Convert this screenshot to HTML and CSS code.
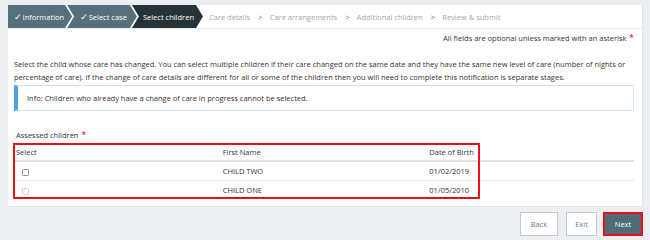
FILE: index.html
```html
<!DOCTYPE html>
<html lang="en">

<head>
    <meta charset="UTF-8">
    <title>Select children</title>
    <meta name="viewport" content="width=device-width, initial-scale=1.0">
    <link rel="stylesheet" href="styles.css">
</head>

<body>

    <div class="page">
        <div class="card">
            <div class="steps">
                <div class="step done first"><span class="tick">&#10003;</span> Information</div>
                <div class="step done"><span class="tick">&#10003;</span> Select case</div>
                <div class="step current">Select children</div>
                <div class="step todo">Care details</div>
                <span class="sep">&gt;</span>
                <div class="step todo">Care arrangements</div>
                <span class="sep">&gt;</span>
                <div class="step todo">Additional children</div>
                <span class="sep">&gt;</span>
                <div class="step todo">Review &amp; submit</div>
            </div>

            <div class="content">
                <p class="optional">All fields are optional unless marked with an asterisk <span class="req">*</span></p>

                <p class="intro">Select the child whose care has changed. You can select multiple children if their care changed on the same date and they have the same new level of care (number of nights or percentage of care). If the change of care details are different for all or some of the children then you will need to complete this notification is separate stages.</p>

                <div class="info">Info: Children who already have a change of care in progress cannot be selected.</div>

                <p class="label">Assessed children <span class="req">*</span></p>

                <div class="table-wrap">
                    <table class="children">
                        <thead>
                            <tr>
                                <th>Select</th>
                                <th>First Name</th>
                                <th>Date of Birth</th>
                            </tr>
                        </thead>
                        <tbody>
                            <tr>
                                <td><input type="checkbox"></td>
                                <td>CHILD TWO</td>
                                <td>01/02/2019</td>
                            </tr>
                            <tr>
                                <td><input type="checkbox" disabled></td>
                                <td>CHILD ONE</td>
                                <td>01/05/2010</td>
                            </tr>
                        </tbody>
                    </table>
                    <div class="highlight"></div>
                </div>
            </div>
        </div>

        <div class="actions">
            <button class="btn back">Back</button>
            <button class="btn exit">Exit</button>
            <button class="btn primary">Next</button>
        </div>
    </div>

</body>

</html>
```

FILE: styles.css
```css
body {
    font-family: "Open Sans", Arial, sans-serif;
    margin: 0;
    background: #ebeff2;
    color: #333;
}

.page {
    padding: 5px 7px 0 8px;
}

.card {
    background: #fff;
    border: 1px solid #e0e5e9;
    border-top: none;
    border-left: none;
}

/* progress steps */
.steps {
    display: flex;
    align-items: center;
    height: 23px;
    border-bottom: 1px solid #e6e9ec;
    font-size: 7.5px;
}

.step {
    height: 23px;
    display: flex;
    align-items: center;
    white-space: nowrap;
}

.tick {
    font-family: "DejaVu Sans", sans-serif;
    font-size: 9px;
    font-weight: bold;
    margin-right: 1px;
}

.step.done,
.step.current {
    color: #fff;
    margin-left: -5px;
    clip-path: polygon(0 0, calc(100% - 7px) 0, 100% 50%, calc(100% - 7px) 100%, 0 100%, 7px 50%);
}

.step.done {
    background: #566f7a;
    padding: 0 10px 0 13px;
}

.step.done.first {
    margin-left: 0;
    padding: 0 8px 0 6px;
    clip-path: polygon(0 0, calc(100% - 7px) 0, 100% 50%, calc(100% - 7px) 100%, 0 100%);
}

.step.current {
    background: #263238;
    padding: 0 9px 0 11px;
}

.step.todo {
    color: #a3a8ac;
}

.step.current + .step.todo {
    margin-left: 6px;
}

.sep {
    color: #6f767b;
    font-size: 8px;
    padding: 0 7px 0 8px;
}

/* page body */
.content {
    padding: 4px 8px 7px 6px;
    font-size: 7.5px;
}

p {
    margin: 0;
}

.optional {
    text-align: right;
    line-height: 10px;
}

.req {
    color: #d0021b;
    font-size: 8.5px;
    margin-left: 1px;
}

.intro {
    margin-top: 15px;
    line-height: 12.6px;
}

.info {
    margin-top: 2px;
    padding: 7px 9px;
    line-height: 10px;
    border: 1px solid #cfe5fa;
    border-left: 4px solid #4aa2f0;
}

.label {
    margin-top: 19px;
    padding-left: 2px;
    line-height: 10px;
}

.table-wrap {
    position: relative;
    margin-top: 3px;
}

.children {
    width: 100%;
    border-collapse: collapse;
    table-layout: fixed;
}

.children th,
.children td {
    text-align: left;
    padding: 0 2px;
    height: 18px;
}

.children th {
    font-weight: normal;
    height: 17px;
    border-bottom: 2px solid #dde1e4;
}

.children tbody tr:first-child td {
    border-bottom: 1px solid #e6e9ec;
}

.children input {
    appearance: none;
    width: 7px;
    height: 7px;
    margin: 0 0 0 6px;
    vertical-align: middle;
    border: 1px solid #8a8f93;
    border-radius: 1.5px;
    background: #fff;
}

.children input:disabled {
    border-color: #c9cdd0;
}

.highlight {
    position: absolute;
    left: -1px;
    top: 0;
    bottom: 0;
    width: 467px;
    border: 2px solid #e8101a;
    box-sizing: border-box;
}

/* buttons */
.actions {
    display: flex;
    justify-content: flex-end;
    gap: 8px;
    padding: 5px 0 0;
}

.btn {
    font-family: inherit;
    font-size: 7.5px;
    height: 24px;
    padding: 0;
    background: #fff;
    color: #72787c;
    border: 1px solid #c4c9cc;
}

.btn.back {
    width: 38px;
}

.btn.exit {
    width: 31px;
    margin-right: -2px;
}

.btn.primary {
    width: 40px;
    background: #4f6b75;
    color: #fff;
    border: 2px solid #e8101a;
}
```
